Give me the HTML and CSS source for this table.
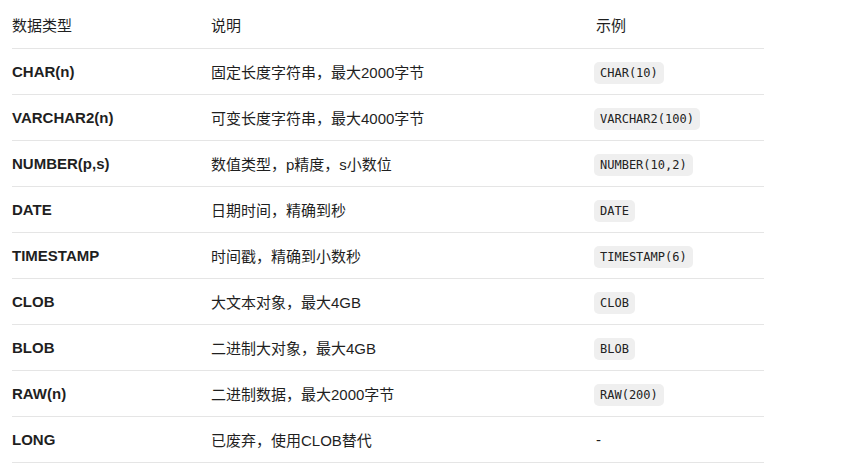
FILE: index.html
```html
<!DOCTYPE html>
<html lang="zh">
<head>
<meta charset="utf-8">
<link rel="stylesheet" href="styles.css">
</head>
<body>
<table class="types">
  <colgroup>
    <col class="c1"><col class="c2"><col class="c3">
  </colgroup>
  <thead>
    <tr><th>数据类型</th><th>说明</th><th>示例</th></tr>
  </thead>
  <tbody>
    <tr><td class="name">CHAR(n)</td><td>固定长度字符串，最大2000字节</td><td><code>CHAR(10)</code></td></tr>
    <tr><td class="name">VARCHAR2(n)</td><td>可变长度字符串，最大4000字节</td><td><code>VARCHAR2(100)</code></td></tr>
    <tr><td class="name">NUMBER(p,s)</td><td>数值类型，p精度，s小数位</td><td><code>NUMBER(10,2)</code></td></tr>
    <tr><td class="name">DATE</td><td>日期时间，精确到秒</td><td><code>DATE</code></td></tr>
    <tr><td class="name">TIMESTAMP</td><td>时间戳，精确到小数秒</td><td><code>TIMESTAMP(6)</code></td></tr>
    <tr><td class="name">CLOB</td><td>大文本对象，最大4GB</td><td><code>CLOB</code></td></tr>
    <tr><td class="name">BLOB</td><td>二进制大对象，最大4GB</td><td><code>BLOB</code></td></tr>
    <tr><td class="name">RAW(n)</td><td>二进制数据，最大2000字节</td><td><code>RAW(200)</code></td></tr>
    <tr><td class="name">LONG</td><td>已废弃，使用CLOB替代</td><td>-</td></tr>
  </tbody>
</table>
</body>
</html>
```
FILE: styles.css
```css
html, body {
  margin: 0;
  padding: 0;
  background: #ffffff;
}
body {
  font-family: "Liberation Sans", "Noto Sans CJK SC", sans-serif;
  font-size: 15px;
  color: #1f1f1f;
}
.types {
  margin: 0 0 0 12px;
  width: 752px;
  table-layout: fixed;
  border-collapse: collapse;
}
.c1 { width: 199px; }
.c2 { width: 385px; }
.c3 { width: 168px; }
.types th,
.types td {
  padding: 0;
  text-align: left;
  vertical-align: middle;
  border-bottom: 1px solid #e5e5e5;
  white-space: nowrap;
}
.types th {
  font-weight: normal;
  height: 48px;
}
.types td {
  height: 45px;
}
.types td.name {
  font-weight: bold;
}
code {
  font-family: "DejaVu Sans Mono", monospace;
  font-size: 12px;
  background: #efefef;
  border-radius: 5px;
  padding: 4px 6px;
  margin-left: -2px;
  color: #222;
}
```
